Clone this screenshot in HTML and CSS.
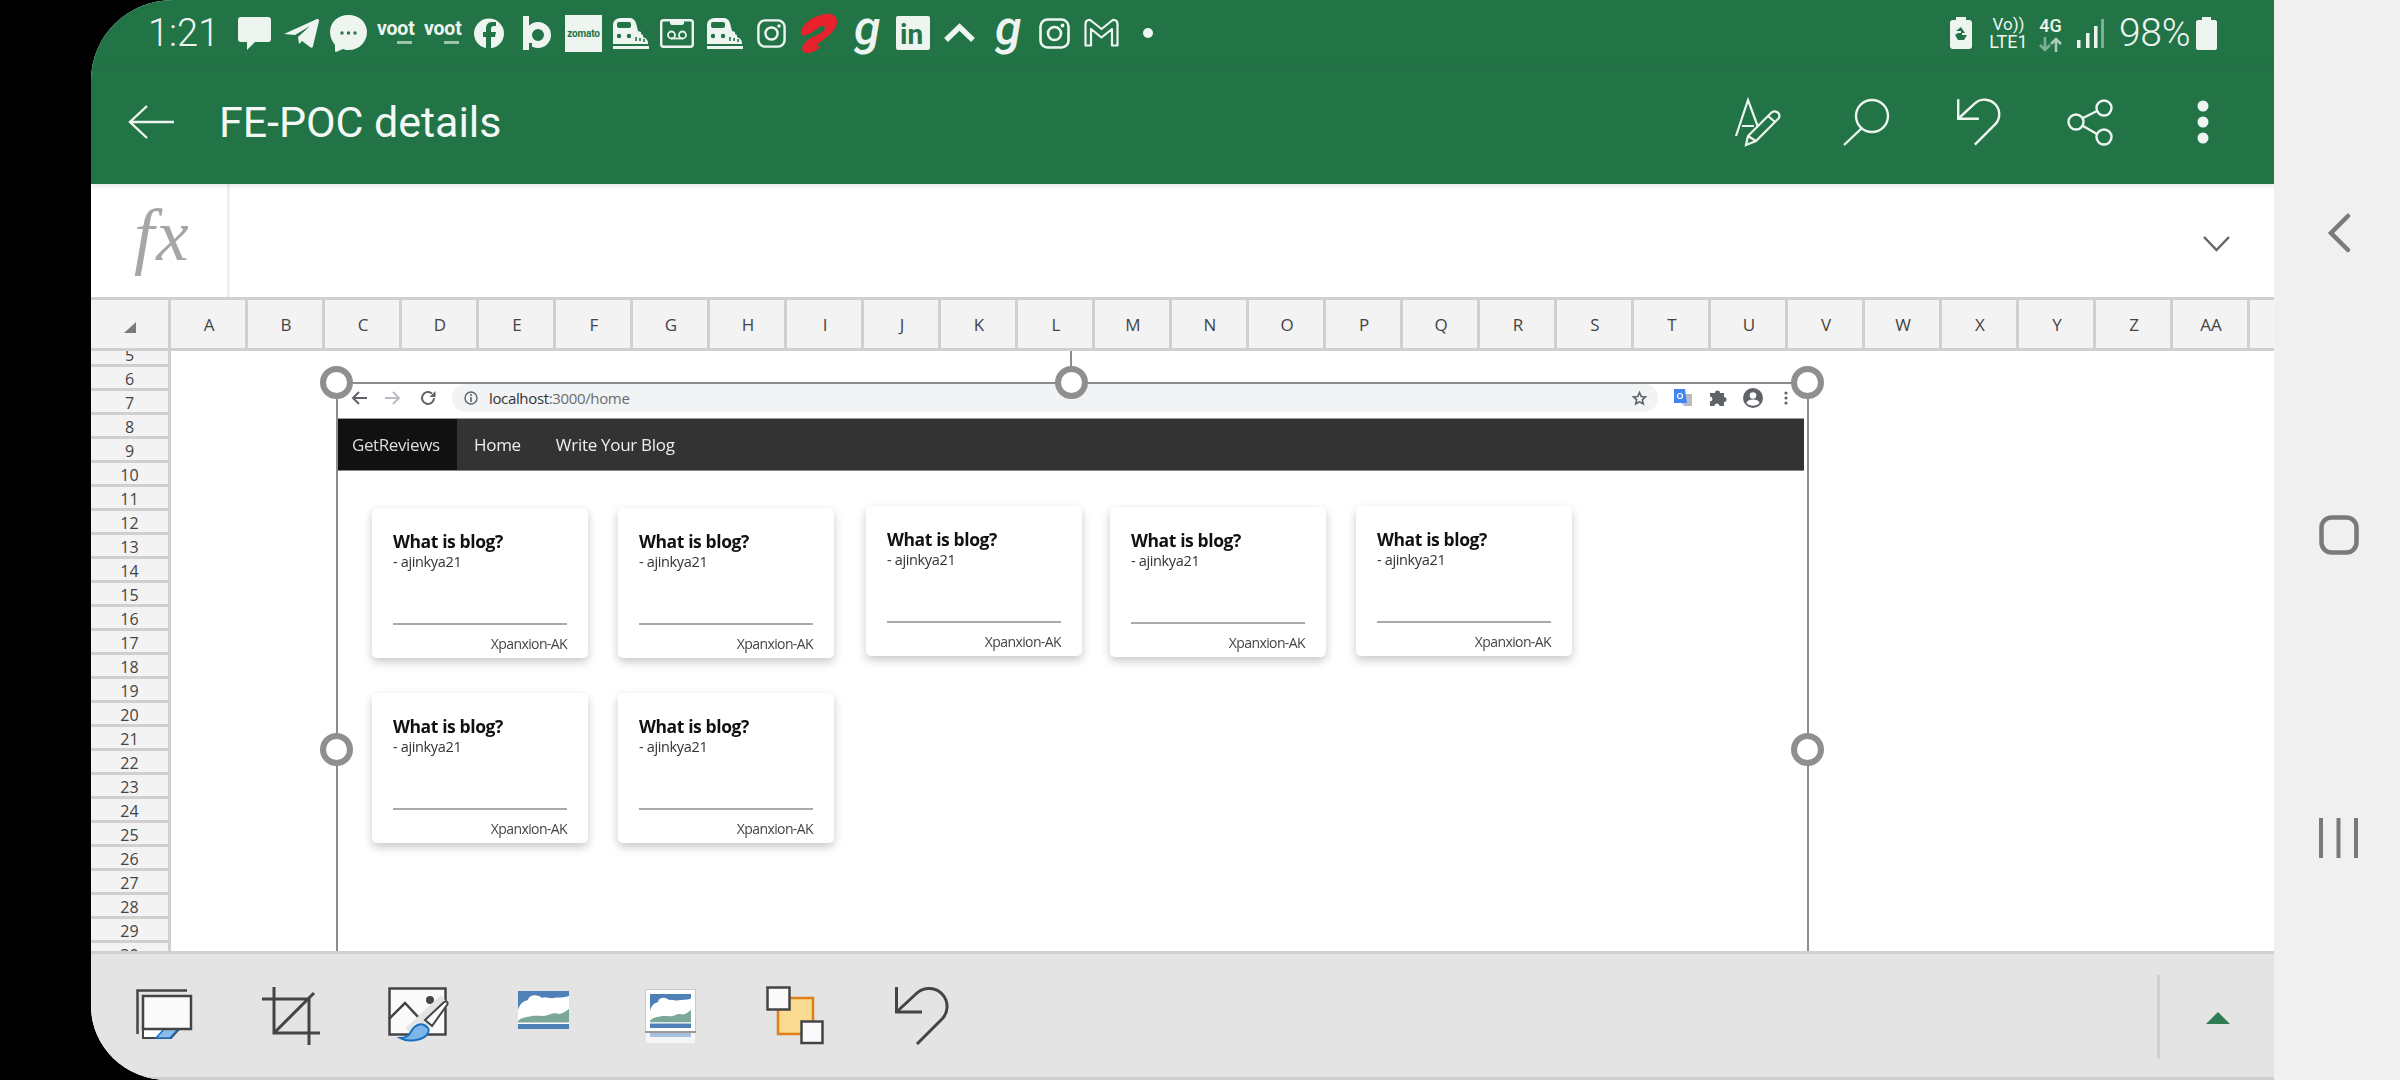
FILE: index.html
```html
<!DOCTYPE html>
<html lang="en">
<head>
<meta charset="utf-8">
<title>FE-POC details</title>
<link rel="stylesheet" href="styles.css">
</head>
<body>
<svg class="defs" width="0" height="0" aria-hidden="true">
  <symbol id="train" viewBox="0 0 37 31">
    <path fill="#eef5f1" d="M9 0h8c4 0 6 2 7 5l2 8 3 1v2l2 1v2l2 1c2 1 3 3 3 5v1H1V7c0-4 3-7 8-7z"/>
    <rect x="5" y="4" width="14" height="6" rx="2" fill="#227447"/>
    <circle cx="7" cy="18" r="2.2" fill="#227447"/><circle cx="17" cy="18" r="2.2" fill="#227447"/>
    <path stroke="#227447" stroke-width="1.6" d="M24 19v4M28 20v3M32 21v3"/>
    <path stroke="#eef5f1" stroke-width="3" d="M1 29.5h36"/>
  </symbol>
  <symbol id="insta" viewBox="0 0 31 31">
    <rect x="1.5" y="1.5" width="28" height="28" rx="7" fill="none" stroke="#eef5f1" stroke-width="2.6"/>
    <circle cx="15.5" cy="15.5" r="6.5" fill="none" stroke="#eef5f1" stroke-width="2.6"/>
    <circle cx="23.5" cy="7.5" r="1.9" fill="#eef5f1"/>
  </symbol>
  <symbol id="landscape" viewBox="0 0 51 38">
    <rect width="51" height="38" fill="#4f81b8"/>
    <path fill="#fff" d="M0 19C2 12 6 10 10 9 11 3 20 3 24 7 28 5 32 8 35 7 40 6 46 7 51 5V33H0z"/>
    <path fill="#7ba898" d="M0 30C3 26 10 26 14 25 20 24 25 26 30 24 35 22 38 22 41 23 44 23 48 20 51 18V31.500H0z"/>
  </symbol>
</svg>

<div class="screen">
  <main class="app">
    <header class="status">
      <span class="time">1:21</span>
      <svg class="s-msg" width="33" height="33" viewBox="0 0 33 33"><path fill="#eef5f1" d="M3 0h27c2 0 3 1 3 3v19c0 2-1 3-3 3H17l-8 8v-8H3c-2 0-3-1-3-3V3c0-2 1-3 3-3z"/></svg>
      <svg class="s-tg" width="35" height="29" viewBox="0 0 35 29"><path fill="#eef5f1" d="M0 15 33 0c1 0 2 0 2 2l-6 25c0 2-2 2-3 1l-8-6-3 3-1-7 12-11-15 9z"/></svg>
      <svg class="s-chat" width="37" height="37" viewBox="0 0 37 37"><path fill="#eef5f1" d="M18.500 0C29 0 37 7 37 17s-8 18-18 18c-2 0-4 0-6-1l-7 3c-1 0-1-1-1-2v-5C2 26 0 22 0 17 0 7 8 0 18.500 0z"/><g fill="#227447"><circle cx="12" cy="18" r="1.700"/><circle cx="18.500" cy="18" r="1.700"/><circle cx="25" cy="18" r="1.700"/></g></svg>
      <span class="voot s-v1">voot<i></i></span>
      <span class="voot s-v2">voot<i></i></span>
      <svg class="s-fb" width="30" height="31" viewBox="0 0 30 31"><circle cx="15" cy="15.500" r="15" fill="#eef5f1"/><path fill="#227447" d="M17 31V19h4l1-5h-5v-3c0-2 1-3 3-3h2V4h-4c-4 0-6 3-6 6v4H9v5h3v12z"/></svg>
      <svg class="s-b" width="28" height="34" viewBox="0 0 28 34"><rect width="6" height="34" fill="#eef5f1"/><circle cx="15" cy="19" r="9.500" fill="none" stroke="#eef5f1" stroke-width="7"/><rect x="6" y="27" width="3" height="7" fill="#227447"/></svg>
      <span class="zomato s-zom">zomato</span>
      <svg class="s-tr1" width="37" height="31"><use href="#train"/></svg>
      <svg class="s-vm" width="34" height="29" viewBox="0 0 34 29"><rect x="1.200" y="1.200" width="31.600" height="26.600" rx="2.500" fill="none" stroke="#eef5f1" stroke-width="2.400"/><path fill="#eef5f1" d="M10 1h14v3c0 1-1 2-2 2H12c-1 0-2-1-2-2z"/><circle cx="11.500" cy="16" r="3.500" fill="none" stroke="#eef5f1" stroke-width="1.800"/><circle cx="22.500" cy="16" r="3.500" fill="none" stroke="#eef5f1" stroke-width="1.800"/><path stroke="#eef5f1" stroke-width="1.800" d="M11 19.500h12"/></svg>
      <svg class="s-tr2" width="37" height="31"><use href="#train"/></svg>
      <svg class="s-ig1" width="29" height="29"><use href="#insta"/></svg>
      <svg class="s-air" width="38" height="40" viewBox="0 0 38 40"><path fill="#e8222d" d="M2 20C2 12 14 2 28 1 35 0 38 4 38 9 38 17 28 24 20 30 16 33 18 34 22 33 18 38 12 40 8 40 4 40 2 37 4 33 6 27 14 24 22 20 26 17 28 14 24 13 18 14 14 20 8 22 4 23 2 22 2 20z"/></svg>
      <span class="gaana s-g1">g</span>
      <svg class="s-in" width="34" height="34" viewBox="0 0 34 34"><rect width="34" height="34" rx="2" fill="#eef5f1"/><text x="4" y="28" class="in-text">in</text></svg>
      <svg class="s-up" width="31" height="20" viewBox="0 0 31 20"><path fill="none" stroke="#eef5f1" stroke-width="5.500" d="M2 17 15.500 4 29 17"/></svg>
      <span class="gaana s-g2">g</span>
      <svg class="s-ig2" width="31" height="31"><use href="#insta"/></svg>
      <svg class="s-gm" width="35" height="28" viewBox="0 0 35 28"><path fill="none" stroke="#eef5f1" stroke-width="2.200" stroke-linejoin="round" d="M1.500 26.500V5c0-4 4-5 6-3l10 8 10-8c2-2 6-1 6 3v21.500h-5.500V10l-10.500 8.500L7 10v16.500z"/></svg>
      <span class="dot s-dot"></span>

      <div class="status-right">
        <svg class="s-batt" width="22" height="32" viewBox="0 0 22 32"><path fill="#eef5f1" d="M6 0h10v3h3c2 0 3 1 3 3v23c0 2-1 3-3 3H3c-2 0-3-1-3-3V6c0-2 1-3 3-3h3z"/><path fill="#227447" d="m11 10 4 6h-3v2h5l-3 5h-6l-3-5 3-2h3v-2H6z"/></svg>
        <div class="net s-lte"><span class="vo">Vo))</span><span>LTE1</span></div>
        <div class="net s-4g"><span>4G</span>
          <svg width="23" height="15" viewBox="0 0 23 15"><path fill="none" stroke="#7fae96" stroke-width="2.600" d="M6 0v13M1 8l5 5 5-5"/><path fill="none" stroke="#a9cbb9" stroke-width="2.600" d="M17 15V2M12 7l5-5 5 5"/></svg>
        </div>
        <svg class="s-sig" width="27" height="29" viewBox="0 0 27 29"><g fill="#eef5f1"><rect y="21" width="3.500" height="8"/><rect x="9" y="14" width="3.500" height="15"/><rect x="17" y="7" width="3.500" height="22"/></g><rect x="24" width="3" height="29" fill="#7fae96"/></svg>
        <span class="pct">98%</span>
        <svg class="s-full" width="21" height="33" viewBox="0 0 21 33"><path fill="#eef5f1" d="M6 0h9v3h4c1 0 2 1 2 2v26c0 1-1 2-2 2H2c-1 0-2-1-2-2V5c0-1 1-2 2-2h4z"/></svg>
      </div>
    </header>

    <div class="appbar">
      <svg class="a-back" width="46" height="34" viewBox="0 0 46 34"><path fill="none" stroke="#eef5f1" stroke-width="2.400" d="M46 17H2M19 1 2 17l17 16"/></svg>
      <h1 class="title">FE-POC details</h1>
      <div class="actions">
        <svg class="a-ink" width="46" height="47" viewBox="0 0 46 47"><g fill="none" stroke="#eef5f1" stroke-width="2.200"><path d="M1 37 13 1l10 27M7 27h12"/><path d="M11 46 13 37 36 14c2-2 4-2 6-1s3 3 2 6L21 42zM13 37l8 5M33 17l7 6"/></g></svg>
        <svg class="a-search" width="46" height="47" viewBox="0 0 46 47"><g fill="none" stroke="#eef5f1" stroke-width="2.400"><circle cx="29" cy="17" r="16"/><path d="M19 29 1 46"/></g></svg>
        <svg class="a-undo" width="43" height="48" viewBox="0 0 53 58"><path fill="none" stroke="#eef5f1" stroke-width="3" d="M1.500 1V25H27M1.500 25 22 6A18 18 0 0 1 46 33L22 57"/></svg>
        <svg class="a-share" width="44" height="47" viewBox="0 0 44 47"><g fill="none" stroke="#eef5f1" stroke-width="2.400"><circle cx="36" cy="9" r="7.500"/><circle cx="8" cy="23" r="7.500"/><circle cx="36" cy="38" r="7.500"/><path d="m15 19 14-7M15 27l14 8"/></g></svg>
        <svg class="a-more" width="12" height="44" viewBox="0 0 12 44"><g fill="#eef5f1"><circle cx="6" cy="6" r="5.500"/><circle cx="6" cy="22" r="5.500"/><circle cx="6" cy="38" r="5.500"/></g></svg>
      </div>
    </div>

    <div class="formula">
      <div class="fx"><span>fx</span></div>
      <svg class="f-chev" width="27" height="16" viewBox="0 0 27 16"><path fill="none" stroke="#666" stroke-width="2.500" d="M1 1l12.500 13L26 1"/></svg>
    </div>

    <div class="colhead">
      <div class="corner"><span class="tri"></span></div>
      <div class="col">A</div><div class="col">B</div><div class="col">C</div><div class="col">D</div><div class="col">E</div><div class="col">F</div><div class="col">G</div><div class="col">H</div><div class="col">I</div><div class="col">J</div><div class="col">K</div><div class="col">L</div><div class="col">M</div><div class="col">N</div><div class="col">O</div><div class="col">P</div><div class="col">Q</div><div class="col">R</div><div class="col">S</div><div class="col">T</div><div class="col">U</div><div class="col">V</div><div class="col">W</div><div class="col">X</div><div class="col">Y</div><div class="col">Z</div><div class="col">AA</div><div class="col col-rest"></div>
    </div>

    <div class="sheet">
      <div class="rows">
        <div class="row row-cut">5</div><div class="row">6</div><div class="row">7</div><div class="row">8</div><div class="row">9</div><div class="row">10</div><div class="row">11</div><div class="row">12</div><div class="row">13</div><div class="row">14</div><div class="row">15</div><div class="row">16</div><div class="row">17</div><div class="row">18</div><div class="row">19</div><div class="row">20</div><div class="row">21</div><div class="row">22</div><div class="row">23</div><div class="row">24</div><div class="row">25</div><div class="row">26</div><div class="row">27</div><div class="row">28</div><div class="row">29</div><div class="row">30</div>
      </div>

      <div class="picture">
        <div class="shot">
          <div class="chrome">
            <svg class="c-back" width="16" height="14" viewBox="0 0 16 14"><path fill="none" stroke="#5f6368" stroke-width="2" d="M16 7H2M8 1 2 7l6 6"/></svg>
            <svg class="c-fwd" width="16" height="14" viewBox="0 0 16 14"><path fill="none" stroke="#b9bcc0" stroke-width="2" d="M0 7h14M8 1l6 6-6 6"/></svg>
            <svg class="c-load" width="16" height="16" viewBox="0 0 16 16"><path fill="none" stroke="#5f6368" stroke-width="2" d="M14 8a6 6 0 1 1-2-4.500"/><path fill="#5f6368" d="M15.500 1v6h-6z"/></svg>
            <div class="url">
              <svg width="14" height="14" viewBox="0 0 14 14"><circle cx="7" cy="7" r="6" fill="none" stroke="#5f6368" stroke-width="1.400"/><path stroke="#5f6368" stroke-width="1.600" d="M7 6v5M7 3v2"/></svg>
              <span class="host">localhost<em>:3000/home</em></span>
              <svg class="star" width="15" height="15" viewBox="0 0 15 15"><path fill="none" stroke="#5f6368" stroke-width="1.600" d="m7.500 1.500 1.800 4 4.200.4-3.200 2.900 1 4.200-3.800-2.200-3.800 2.200 1-4.200L1.500 5.900l4.200-.4z"/></svg>
            </div>
            <svg class="c-tr" width="18" height="18" viewBox="0 0 18 18"><path fill="#b9bcc0" d="M8 5h10v12H10z"/><path fill="#4285f4" d="M0 0h11l2 14H9l1 3-2-3H0z"/><circle cx="6" cy="7" r="2.500" fill="none" stroke="#fff" stroke-width="1.200"/></svg>
            <svg class="c-ext" width="16" height="16" viewBox="0 0 16 16"><path fill="#5f6368" d="M5 3a2.500 2.500 0 0 1 5 0h4v4a2.500 2.500 0 0 1 0 5v4H9.500a2.500 2.500 0 0 0-5 0H0v-4.500a2.500 2.500 0 0 0 0-5V3z"/></svg>
            <svg class="c-user" width="20" height="20" viewBox="0 0 20 20"><circle cx="10" cy="10" r="10" fill="#5f6368"/><circle cx="10" cy="7.500" r="3.300" fill="#fff"/><path fill="#fff" d="M3.500 15c1-3 4-3.500 6.500-3.500s5.500.5 6.500 3.500c-3 3.500-10 3.500-13 0z"/></svg>
            <svg class="c-more" width="4" height="14" viewBox="0 0 4 14"><g fill="#5f6368"><circle cx="2" cy="2" r="1.600"/><circle cx="2" cy="7" r="1.600"/><circle cx="2" cy="12" r="1.600"/></g></svg>
          </div>
          <nav class="site-nav">
            <span class="brand">GetReviews</span>
            <span class="link link-home">Home</span>
            <span class="link link-write">Write Your Blog</span>
          </nav>
          <div class="cards">
            <div class="card-row">
              <article class="card"><h2>What is blog?</h2><p class="author">- ajinkya21</p><p class="org">Xpanxion-AK</p></article>
              <article class="card card-2"><h2>What is blog?</h2><p class="author">- ajinkya21</p><p class="org">Xpanxion-AK</p></article>
              <article class="card card-3"><h2>What is blog?</h2><p class="author">- ajinkya21</p><p class="org">Xpanxion-AK</p></article>
              <article class="card card-4"><h2>What is blog?</h2><p class="author">- ajinkya21</p><p class="org">Xpanxion-AK</p></article>
              <article class="card card-5"><h2>What is blog?</h2><p class="author">- ajinkya21</p><p class="org">Xpanxion-AK</p></article>
            </div>
            <div class="card-row">
              <article class="card"><h2>What is blog?</h2><p class="author">- ajinkya21</p><p class="org">Xpanxion-AK</p></article>
              <article class="card card-2"><h2>What is blog?</h2><p class="author">- ajinkya21</p><p class="org">Xpanxion-AK</p></article>
            </div>
          </div>
        </div>
        <span class="stem"></span>
        <span class="handle h-tl"></span><span class="handle h-tm"></span><span class="handle h-tr"></span>
        <span class="handle h-ml"></span><span class="handle h-mr"></span>
      </div>
    </div>

    <footer class="ribbon">
      <svg class="r-shadow" width="56" height="50" viewBox="0 0 56 50"><path fill="none" stroke="#444" stroke-width="2.500" d="M1.500 45V1.500H51"/><path fill="#fff" stroke="#444" stroke-width="2" d="M7 38v11h28l10-11z"/><path fill="#8bbcec" stroke="#1a6fc0" stroke-width="1.500" d="m20 49 9-10h14l-9 10z"/><rect x="7" y="7" width="48" height="33" fill="#fafafa" stroke="#444" stroke-width="2.500"/></svg>
      <svg class="r-crop" width="58" height="58" viewBox="0 0 58 58"><g fill="none" stroke="#444" stroke-width="3"><path d="M12 0v46h46M0 12h47v46M12 46 52 6"/></g></svg>
      <svg class="r-art" width="61" height="56" viewBox="0 0 61 56"><rect x="1.500" y="1.500" width="56" height="46" fill="#fafafa" stroke="#444" stroke-width="2.500"/><circle cx="42" cy="13" r="4" fill="#444"/><path fill="none" stroke="#444" stroke-width="2.500" d="M1 32 17 16l15 16"/><path fill="none" stroke="#e4e4e4" stroke-width="13" d="M22 46 57 13"/><path fill="#fafafa" stroke="#444" stroke-width="2" d="M37 33 55 16c3-3 6-1 4 2L44 39z"/><path fill="#7fb6ea" stroke="#1a6fc0" stroke-width="2" d="M12 51c6 0 9-2 12-8 2-4 8-7 12-5s6 4 4 8c-3 7-20 10-28 5z"/></svg>
      <svg class="r-pic1" width="51" height="38"><use href="#landscape"/></svg>
      <svg class="r-pic2" width="51" height="54" viewBox="0 0 51 54"><rect x=".5" y=".5" width="50" height="42" fill="#fff" stroke="#c9c9c9"/><svg x="5" y="5" width="41" height="34" viewBox="0 0 51 38" preserveAspectRatio="none"><use href="#landscape"/></svg><rect y="42" width="51" height="2" fill="#999"/><rect x="1" y="44" width="49" height="10" fill="#f3f5f8"/><rect x="5" y="44" width="41" height="4" fill="#a8c0dc"/></svg>
      <svg class="r-pos" width="58" height="59" viewBox="0 0 58 59"><rect x="12" y="12" width="35" height="36" fill="#f8db90" stroke="#e07f1a" stroke-width="2.500"/><rect x="1.500" y="1.500" width="22" height="22" fill="#fafafa" stroke="#444" stroke-width="2.500"/><rect x="35.500" y="35.500" width="21" height="21.500" fill="#fafafa" stroke="#444" stroke-width="2.500"/></svg>
      <svg class="r-undo" width="53" height="58" viewBox="0 0 53 58"><path fill="none" stroke="#444" stroke-width="3" d="M1.500 0V25H27M1.500 25 22 6A18 18 0 0 1 46 33L22 57"/></svg>
      <div class="ribbon-end">
        <span class="sep"></span>
        <span class="up"></span>
      </div>
    </footer>
  </main>

  <aside class="softkeys">
    <svg width="22" height="38" viewBox="0 0 22 38"><path fill="none" stroke="#7a7a7a" stroke-width="4.500" stroke-linecap="round" d="M20 2 3 19l17 17"/></svg>
    <svg width="40" height="40" viewBox="0 0 40 40"><rect x="2.500" y="2.500" width="35" height="35" rx="10" fill="none" stroke="#7a7a7a" stroke-width="4.500"/></svg>
    <svg width="39" height="40" viewBox="0 0 39 40"><path stroke="#7a7a7a" stroke-width="4" d="M2 0v40M19.500 0v40M37 0v40"/></svg>
  </aside>
</div>
</body>
</html>
```

FILE: styles.css
```css
* { box-sizing: border-box; }
html, body { margin: 0; padding: 0; background: #000; }
.defs { position: absolute; }
svg { display: block; flex: none; overflow: visible; }

.screen {
  width: 2400px;
  height: 1080px;
  padding-left: 91px;
  display: flex;
  overflow: hidden;
  background: #000;
  font-family: "Roboto", sans-serif;
}
.app {
  width: 2183px;
  height: 1080px;
  display: flex;
  flex-direction: column;
  background: #fff;
  overflow: hidden;
  border-top-left-radius: 82px 80px;
  border-bottom-left-radius: 76px 74px;
}

/* status bar */
.status {
  height: 66px;
  padding: 0 57px 0 57px;
  background: #227447;
  color: #eef5f1;
  display: flex;
  align-items: center;
}
.time { font-size: 38px; font-weight: 300; width: 69px; white-space: nowrap; }
.s-msg { margin-left: 21px; }
.s-tg { margin-left: 13px; }
.s-chat { margin-left: 11px; }
.voot {
  display: block;
  width: 38px;
  height: 34px;
  padding-top: 2px;
  font: 700 19.5px/22px "Roboto", sans-serif;
  letter-spacing: -.2px;
  white-space: nowrap;
}
.voot i { display: block; width: 15px; height: 3px; margin: 1px 0 0 20px; background: #9cc2ad; }
.s-v1 { margin-left: 10px; }
.s-v2 { margin-left: 9px; width: 36px; }
.s-fb { margin-left: 14px; }
.s-b { margin-left: 19px; }
.zomato {
  margin-left: 14px;
  width: 37px;
  height: 37px;
  background: #eef5f1;
  color: #227447;
  font: 700 10px/37px "Roboto", sans-serif;
  text-align: center;
  letter-spacing: -.2px;
}
.s-tr1 { margin-left: 10px; }
.s-vm { margin-left: 11px; }
.s-tr2 { margin-left: 12px; }
.s-ig1 { margin-left: 14px; }
.s-air { margin-left: 13px; }
.gaana {
  font: italic 500 48px/40px "Roboto", sans-serif;
  width: 25px;
  height: 40px;
  color: #eef5f1;
  margin-top: -11px;
}
.s-g1 { margin-left: 17px; }
.in-text { font: 700 28px "Roboto", sans-serif; fill: #227447; }
.s-in { margin-left: 17px; }
.s-up { margin-left: 14px; }
.s-g2 { margin-left: 20px; }
.s-ig2 { margin-left: 19px; }
.s-gm { margin-left: 14px; }
.dot { width: 10px; height: 10px; border-radius: 50%; background: #eef5f1; }
.s-dot { margin-left: 24px; }

.status-right { margin-left: auto; display: flex; align-items: center; }
.net {
  display: flex;
  flex-direction: column;
  align-items: center;
  font: 400 18px/17px "Roboto", sans-serif;
  white-space: nowrap;
}
.vo { font-size: 17px; }
.s-lte { margin-left: 17px; width: 39px; }
.s-4g { margin-left: 11px; width: 23px; font-weight: 500; margin-top: 2px; }
.s-4g svg { margin-top: 3px; }
.s-sig { margin-left: 15px; }
.pct { margin-left: 15px; font-size: 39px; font-weight: 300; width: 71px; white-space: nowrap; letter-spacing: -.3px; }
.s-full { margin-left: 6px; }

/* app bar */
.appbar {
  height: 118px;
  padding: 0 0 6px 37px;
  display: flex;
  align-items: center;
  background: #227447;
  position: relative;
  box-shadow: 0 2px 6px rgba(0, 0, 0, .1);
}
.title {
  margin: 0 0 0 45px;
  font-size: 43px;
  font-weight: 400;
  color: #f3f8f5;
  white-space: nowrap;
  letter-spacing: -.05px;
}
.actions { margin-left: auto; display: flex; align-items: center; padding-right: 65px; }
.a-search { margin-left: 62px; }
.a-undo { margin-left: 68px; }
.a-share { margin-left: 68px; }
.a-more { margin-left: 85px; }

/* formula bar */
.formula {
  height: 113px;
  display: flex;
  align-items: stretch;
  justify-content: space-between;
  background: #fff;
}
.fx {
  width: 139px;
  border-right: 3px solid #f0f0f0;
  padding: 7px 0 0 43px;
  font: italic 400 73px/90px "Liberation Serif", serif;
  letter-spacing: 2px;
  color: #a6a6a6;
}
.f-chev { margin: 52px 44px 0 0; }

/* column headers */
.colhead {
  height: 54px;
  display: flex;
  background: #f3f3f3;
  border-top: 3px solid #d0d0d0;
  border-bottom: 3px solid #d0d0d0;
  font: 400 17px/50px "Open Sans", sans-serif;
  color: #444;
}
.corner { width: 80px; flex: none; border-right: 3px solid #d0d0d0; position: relative; }
.tri {
  position: absolute;
  left: 33px;
  top: 22px;
  width: 0;
  height: 0;
  border-left: 12px solid transparent;
  border-bottom: 11px solid #7a7a7a;
}
.col { width: 77px; flex: none; padding-left: 2px; border-right: 3px solid #d0d0d0; text-align: center; }
.col-rest { flex: 1; width: auto; border-right: 0; }

/* sheet */
.sheet {
  height: 600px;
  position: relative;
  overflow: hidden;
  background: #fff;
}
.rows { width: 80px; border-right: 3px solid #d0d0d0; background: #f3f3f3; height: 600px; }
.row {
  height: 24px;
  border-bottom: 3px solid #d0d0d0;
  font: 400 16px/24px "Open Sans", sans-serif;
  color: #444;
  text-align: center;
}
.row-cut { height: 16px; line-height: 8px; }

/* floating picture */
.picture {
  position: absolute;
  left: 245px;
  top: 31px;
  width: 1473px;
  height: 734px;
  border: 2px solid #8c8c8c;
  background: #fff;
}
.shot {
  height: 100%;
  filter: blur(.6px);
  font-family: "Open Sans", sans-serif;
}
.chrome { height: 34px; padding-bottom: 6px; display: flex; align-items: center; background: #fff; }
.c-back { margin-left: 13px; }
.c-fwd { margin-left: 18px; }
.c-load { margin-left: 19px; }
.url {
  margin-left: 16px;
  width: 1206px;
  height: 28px;
  border-radius: 14px;
  background: #f1f3f4;
  display: flex;
  align-items: center;
  padding: 0 11px 0 12px;
}
.host { margin-left: 11px; font-size: 15px; color: #333; letter-spacing: -.35px; white-space: nowrap; }
.host em { font-style: normal; color: #6a6d71; }
.star { margin-left: auto; }
.c-tr { margin-left: 16px; }
.c-ext { margin-left: 18px; }
.c-user { margin-left: 17px; }
.c-more { margin-left: 21px; }

.site-nav {
  width: 1466px;
  height: 53px;
  display: flex;
  align-items: center;
  background: #333;
  border-top: 1px solid #9a9a9a;
  border-bottom: 1px solid #888;
  color: #eee;
  font-size: 17px;
  white-space: nowrap;
}
.brand { width: 119px; height: 100%; padding-left: 14px; background: #111; line-height: 51px; color: #ddd; letter-spacing: -.4px; }
.link { letter-spacing: -.3px; }
.link-home { margin-left: 17px; }
.link-write { margin-left: 35px; }

.cards { padding: 37px 0 0 34px; display: flex; flex-direction: column; gap: 35px; }
.card-row { display: flex; align-items: flex-start; }
.card {
  width: 216px;
  height: 150px;
  padding: 21px 21px 0;
  border-radius: 5px;
  background: #fff;
  box-shadow: 0 4px 10px rgba(0, 0, 0, .22);
  flex: none;
}
.card h2 { margin: 0; font-size: 17.5px; line-height: 24px; font-weight: 700; color: #111; white-space: nowrap; letter-spacing: -.4px; }
.author {
  margin: -1px 0 0;
  height: 64px;
  font-size: 14.5px;
  line-height: 20px;
  color: #333;
  letter-spacing: -.35px;
}
.org {
  margin: 7px 0 0;
  padding-top: 9px;
  border-top: 2px solid #aaa;
  font-size: 14px;
  line-height: 20px;
  color: #444;
  text-align: right;
  letter-spacing: -.6px;
  white-space: nowrap;
}
.card-2 { margin-left: 30px; }
.card-3 { margin: -2px 0 0 32px; }
.card-4 { margin: -1px 0 0 28px; }
.card-5 { margin: -2px 0 0 30px; }

.stem { position: absolute; left: 732px; top: -34px; width: 2px; height: 34px; background: #8c8c8c; }
.handle {
  position: absolute;
  width: 33px;
  height: 33px;
  border: 6px solid #8f8f8f;
  border-radius: 50%;
  background: #fff;
}
.h-tl { left: -18px; top: -18px; }
.h-tm { left: 717px; top: -18px; }
.h-tr { right: -17px; top: -18px; }
.h-ml { left: -18px; top: 349px; }
.h-mr { right: -17px; top: 349px; }

/* bottom ribbon */
.ribbon {
  height: 129px;
  display: flex;
  align-items: center;
  background: #e4e4e4;
  border-top: 3px solid #d0d0d0;
  border-bottom: 3px solid #d0d0d0;
  padding-left: 45px;
  position: relative;
}
.r-shadow { margin-top: -4px; }
.r-crop { margin-left: 70px; }
.r-art { margin-left: 68px; margin-top: -2px; }
.r-pic1 { margin-left: 69px; margin-top: -12px; }
.r-pic2 { margin-left: 76px; }
.r-pos { margin-left: 70px; }
.r-undo { margin-left: 71px; }
.ribbon-end {
  margin-left: auto;
  width: 117px;
  height: 100%;
  display: flex;
  align-items: center;
  position: relative;
}
.sep { position: absolute; left: 0; top: 21px; width: 3px; height: 84px; background: #d0d0d0; }
.up {
  position: absolute;
  left: 49px;
  top: 58px;
  width: 0;
  height: 0;
  border-left: 12px solid transparent;
  border-right: 12px solid transparent;
  border-bottom: 12px solid #2e7d52;
}

/* soft keys */
.softkeys {
  width: 126px;
  height: 1080px;
  padding-left: 3px;
  background: #f0f0f0;
  display: flex;
  flex-direction: column;
  align-items: center;
  padding-top: 214px;
  gap: 263px;
}
```
